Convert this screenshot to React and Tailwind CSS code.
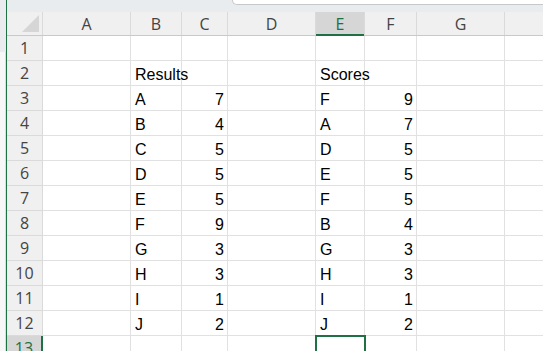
import React from "react";

const cols = [
  { k: "A", w: "w-[88px]" },
  { k: "B", w: "w-[51px]" },
  { k: "C", w: "w-[46px]" },
  { k: "D", w: "w-[88px]" },
  { k: "E", w: "w-[49px]" },
  { k: "F", w: "w-[52px]" },
  { k: "G", w: "w-[88px]" },
  { k: "H", w: "w-[88px]" },
];

const left = [["A", 7], ["B", 4], ["C", 5], ["D", 5], ["E", 5], ["F", 9], ["G", 3], ["H", 3], ["I", 1], ["J", 2]];
const right = [["F", 9], ["A", 7], ["D", 5], ["E", 5], ["F", 5], ["B", 4], ["G", 3], ["H", 3], ["I", 1], ["J", 2]];

function cellContent(r, c) {
  if (r === 2 && c === "B") return { t: "Results" };
  if (r === 2 && c === "E") return { t: "Scores" };
  if (r >= 3 && r <= 12) {
    const i = r - 3;
    if (c === "B") return { t: left[i][0] };
    if (c === "C") return { t: String(left[i][1]), right: true };
    if (c === "E") return { t: right[i][0] };
    if (c === "F") return { t: String(right[i][1]), right: true };
  }
  return null;
}

export default function App() {
  const rows = Array.from({ length: 13 }, (_, i) => i + 1);
  return (
    <div className="w-[543px] h-[351px] overflow-hidden flex bg-white" style={{ fontFamily: "'Liberation Sans', Arial, sans-serif" }}>
      {/* left strip */}
      <div className="w-[7px] shrink-0 flex flex-col border-r border-[#1e7145]">
        <div className="h-[52px] shrink-0 bg-[#e9ebee]" />
        <div className="flex-1 bg-[#f7f7f7] border-r border-[#dcdcdc]" />
      </div>
      <div className="flex-1 min-w-0 flex flex-col overflow-hidden">
        {/* top strip */}
        <div className="h-[12px] shrink-0 bg-[#e9ecef] flex">
          <div className="w-[225px] shrink-0" />
          <div className="flex-1 h-[5px] bg-white border-b border-l border-[#c8c8c8] rounded-bl-[5px]" />
        </div>
        {/* header row */}
        <div className="h-[24px] shrink-0 flex bg-[#f0f0f0] border-b border-[#c9c9c9]">
          <div className="w-[36px] shrink-0 border-r border-[#dadada] relative">
            <div className="absolute right-[3px] bottom-[3px] w-0 h-0 border-l-[17px] border-l-transparent border-b-[17px] border-b-[#d6d6d6]" />
          </div>
          {cols.map((c) => (
            <div
              key={c.k}
              className={`${c.w} shrink-0 flex items-center justify-center text-[16px] border-r border-[#dadada] ${
                c.k === "E" ? "bg-[#d6d6d6] text-[#1e7145] relative" : "text-[#444444]"
              }`}
              style={{ fontFamily: "'Open Sans', 'Liberation Sans', sans-serif" }}
            >
              {c.k === "H" ? "" : c.k}
              {c.k === "E" && <div className="absolute left-0 right-0 -bottom-[1px] h-[2px] bg-[#1e7145]" />}
            </div>
          ))}
        </div>
        {rows.map((r) => (
          <div key={r} className="h-[25px] shrink-0 flex">
            <div
              className={`w-[36px] shrink-0 flex items-center justify-center text-[16px] border-b ${
                r === 13
                  ? "bg-[#d6d6d6] text-[#1e7145] border-r-2 border-r-[#1e7145] border-b-[#dadada]"
                  : "bg-[#f0f0f0] text-[#444444] border-r border-[#dadada]"
              }`}
              style={{ fontFamily: "'Open Sans', 'Liberation Sans', sans-serif" }}
            >
              {r}
            </div>
            {cols.map((c) => {
              const v = cellContent(r, c.k);
              const sel = r === 13 && c.k === "E";
              return (
                <div
                  key={c.k}
                  className={`${c.w} shrink-0 relative flex items-end text-[16px] text-black border-r border-b border-[#e1e1e1] pb-[1px] ${
                    v && v.right ? "justify-end pr-[3px]" : "pl-[4px]"
                  }`}
                >
                  {v && <span className="leading-[18px]">{v.t}</span>}
                  {sel && <div className="absolute -left-[1px] -top-[1px] w-[51px] h-[27px] border-2 border-[#1e7145]" />}
                </div>
              );
            })}
          </div>
        ))}
      </div>
    </div>
  );
}
